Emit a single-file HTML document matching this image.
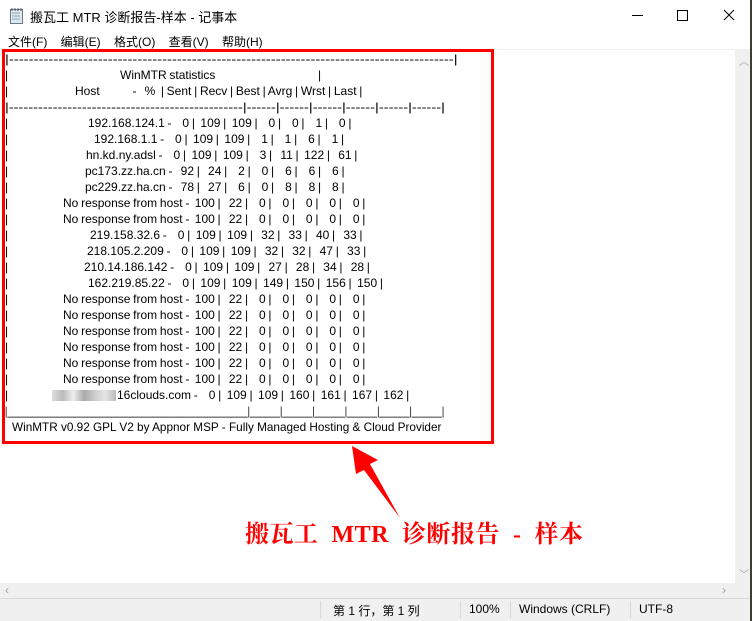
<!DOCTYPE html>
<html><head><meta charset="utf-8"><style>
body{margin:0;width:752px;height:621px;overflow:hidden;background:#fff;position:relative;font-family:"Liberation Sans","Noto Sans CJK SC",sans-serif;}
.abs{position:absolute;}
.l{position:absolute;font-size:12px;white-space:pre;color:#000;line-height:16px;word-spacing:-0.6px;}
.s{position:absolute;font-size:12px;white-space:pre;line-height:16px;transform-origin:0 0;}
.p{position:absolute;left:5px;font-size:12px;line-height:16px;}
</style></head><body>
<div class="abs" style="left:0;top:0;width:752px;height:32px;background:#fff"></div>
<svg class="abs" style="left:9px;top:7px" width="16" height="18" viewBox="0 0 16 18"><rect x="1.5" y="2.5" width="12" height="14" fill="#dfe8f0" stroke="#6a7a8a"/><path d="M3 6h8M3 9h8M3 12h8" stroke="#8aa" /><path d="M3 1v3M6 1v3M9 1v3M12 1v3" stroke="#555"/></svg>
<div class="abs" style="left:30px;top:7px;font-size:13px">搬瓦工 MTR 诊断报告-样本 - 记事本</div>
<div class="abs" style="left:632px;top:15px;width:11px;height:1px;background:#000"></div>
<div class="abs" style="left:677px;top:10px;width:9px;height:9px;border:1px solid #000"></div>
<svg class="abs" style="left:723px;top:9px" width="12" height="12"><path d="M1 1L11 11M11 1L1 11" stroke="#000" stroke-width="1"/></svg>
<div class="abs" style="left:8px;top:33px;font-size:12px;word-spacing:0">文件(F)&nbsp;&nbsp;&nbsp;&nbsp;编辑(E)&nbsp;&nbsp;&nbsp;&nbsp;格式(O)&nbsp;&nbsp;&nbsp;&nbsp;查看(V)&nbsp;&nbsp;&nbsp;&nbsp;帮助(H)</div>
<div class="abs" style="left:0;top:49px;width:752px;height:1px;background:#f0f0f0"></div>
<div class="abs" style="left:735px;top:50px;width:16px;height:533px;background:#f0f0f0"></div>
<div class="abs" style="left:739px;top:53px;font-size:10px;color:#a0a0a0">︿</div>
<div class="abs" style="left:739px;top:566px;font-size:10px;color:#a0a0a0">﹀</div>
<div class="abs" style="left:0;top:583px;width:752px;height:16px;background:#f0f0f0"></div>
<div class="abs" style="left:5px;top:583px;font-size:12px;color:#a0a0a0">‹</div>
<div class="abs" style="left:722px;top:583px;font-size:12px;color:#a0a0a0">›</div>
<div class="abs" style="left:0;top:598px;width:752px;height:1px;background:#d9d9d9"></div>
<div class="abs" style="left:0;top:599px;width:752px;height:22px;background:#f0f0f0"></div>
<div class="abs" style="left:320px;top:601px;width:1px;height:18px;background:#d9d9d9"></div>
<div class="abs" style="left:460px;top:601px;width:1px;height:18px;background:#d9d9d9"></div>
<div class="abs" style="left:510px;top:601px;width:1px;height:18px;background:#d9d9d9"></div>
<div class="abs" style="left:630px;top:601px;width:1px;height:18px;background:#d9d9d9"></div>
<div class="abs" style="left:333px;top:602px;font-size:12px">第 1 行，第 1 列</div>
<div class="abs" style="left:469px;top:602px;font-size:12px">100%</div>
<div class="abs" style="left:519px;top:602px;font-size:12px">Windows (CRLF)</div>
<div class="abs" style="left:639px;top:602px;font-size:12px">UTF-8</div>
<div class="abs" style="left:750px;top:0;width:2px;height:621px;background:#3a4030"></div>

<div class="s" style="left:5px;top:51px;transform:scaleX(1.237)">|------------------------------------------------------------------------------------------|</div>
<div class="l" style="left:5px;top:67px">|</div><div class="l" style="left:120px;top:67px">WinMTR statistics</div><div class="l" style="left:318px;top:67px">|</div>
<div class="l" style="left:5px;top:83px">|</div><div class="l" style="left:75px;top:83px">Host            -   %  | Sent | Recv | Best | Avrg | Wrst | Last |</div>
<div class="s" style="left:5px;top:99px;transform:scaleX(1.22)">|------------------------------------------------|------|------|------|------|------|------|</div>
<div class="p" style="top:115px">|</div><div class="l" style="left:88px;top:115px">192.168.124.1 -    0 |  109 |  109 |    0 |    0 |    1 |    0 |</div>
<div class="p" style="top:131px">|</div><div class="l" style="left:94px;top:131px">192.168.1.1 -    0 |  109 |  109 |    1 |    1 |    6 |    1 |</div>
<div class="p" style="top:147px">|</div><div class="l" style="left:86px;top:147px">hn.kd.ny.adsl -    0 |  109 |  109 |    3 |   11 |  122 |   61 |</div>
<div class="p" style="top:163px">|</div><div class="l" style="left:85px;top:163px">pc173.zz.ha.cn -   92 |   24 |    2 |    0 |    6 |    6 |    6 |</div>
<div class="p" style="top:179px">|</div><div class="l" style="left:85px;top:179px">pc229.zz.ha.cn -   78 |   27 |    6 |    0 |    8 |    8 |    8 |</div>
<div class="p" style="top:195px">|</div><div class="l" style="left:63px;top:195px">No response from host -  100 |   22 |    0 |    0 |    0 |    0 |    0 |</div>
<div class="p" style="top:211px">|</div><div class="l" style="left:63px;top:211px">No response from host -  100 |   22 |    0 |    0 |    0 |    0 |    0 |</div>
<div class="p" style="top:227px">|</div><div class="l" style="left:90px;top:227px">219.158.32.6 -    0 |  109 |  109 |   32 |   33 |   40 |   33 |</div>
<div class="p" style="top:243px">|</div><div class="l" style="left:87px;top:243px">218.105.2.209 -    0 |  109 |  109 |   32 |   32 |   47 |   33 |</div>
<div class="p" style="top:259px">|</div><div class="l" style="left:84px;top:259px">210.14.186.142 -    0 |  109 |  109 |   27 |   28 |   34 |   28 |</div>
<div class="p" style="top:275px">|</div><div class="l" style="left:88px;top:275px">162.219.85.22 -    0 |  109 |  109 |  149 |  150 |  156 |  150 |</div>
<div class="p" style="top:291px">|</div><div class="l" style="left:63px;top:291px">No response from host -  100 |   22 |    0 |    0 |    0 |    0 |    0 |</div>
<div class="p" style="top:307px">|</div><div class="l" style="left:63px;top:307px">No response from host -  100 |   22 |    0 |    0 |    0 |    0 |    0 |</div>
<div class="p" style="top:323px">|</div><div class="l" style="left:63px;top:323px">No response from host -  100 |   22 |    0 |    0 |    0 |    0 |    0 |</div>
<div class="p" style="top:339px">|</div><div class="l" style="left:63px;top:339px">No response from host -  100 |   22 |    0 |    0 |    0 |    0 |    0 |</div>
<div class="p" style="top:355px">|</div><div class="l" style="left:63px;top:355px">No response from host -  100 |   22 |    0 |    0 |    0 |    0 |    0 |</div>
<div class="p" style="top:371px">|</div><div class="l" style="left:63px;top:371px">No response from host -  100 |   22 |    0 |    0 |    0 |    0 |    0 |</div>
<div class="p" style="top:387px">|</div><div class="abs" style="left:52px;top:390px;width:64px;height:11px;background:linear-gradient(90deg,#ddd,#bbb,#eee,#aaa,#ccc,#e5e5e5,#bbb)"></div><div class="l" style="left:117px;top:387px">16clouds.com -    0 |  109 |  109 |  160 |  161 |  167 |  162 |</div>
<div class="s" style="left:5px;top:403px;transform:scaleX(0.75)">|________________________________________________|______|______|______|______|______|______|</div>
<div class="s" style="left:12px;top:419px;transform:scaleX(0.98)">WinMTR v0.92 GPL V2 by Appnor MSP - Fully Managed Hosting &amp; Cloud Provider</div>

<div class="abs" style="left:2px;top:49px;width:486px;height:389px;border:3px solid #f00"></div>
<svg class="abs" style="left:340px;top:440px" width="70" height="85"><polygon points="12,6 38,20 30,24 60,78 24,30 16,34" fill="#f00"/></svg>
<div class="abs" style="left:245px;top:514px;font-size:24px;font-weight:bold;color:#f00;font-family:'Liberation Serif','Noto Serif CJK SC',serif;white-space:pre;letter-spacing:0.5px">搬瓦工  MTR  诊断报告  -  样本</div>
</body></html>
